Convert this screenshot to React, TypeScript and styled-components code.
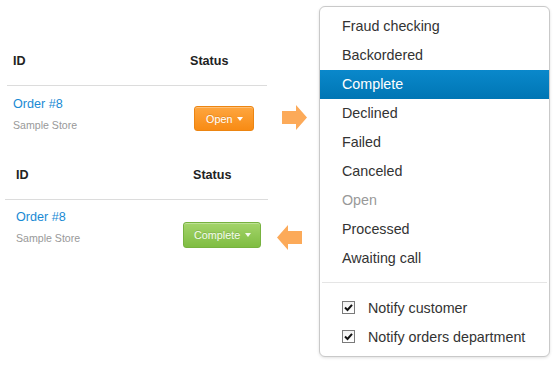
import React from "react";
import styled, { createGlobalStyle, css } from "styled-components";

const GlobalStyle = createGlobalStyle`
  html, body { margin: 0; padding: 0; background: #fff; }
  body { font-family: "Liberation Sans", Arial, sans-serif; color: #333; }
  * { box-sizing: border-box; }
`;

const Page = styled.div`
  display: flex;
  align-items: flex-start;
  width: 554px;
  height: 367px;
  overflow: hidden;
  background: #fff;
`;

const LeftColumn = styled.div`
  width: 319px;
  flex: none;
  padding-top: 37px;
  display: flex;
  flex-direction: column;
`;

const Section = styled.div<{ $left: number; $idW: number; $statusW: number; $rowH: number }>`
  display: grid;
  grid-template-columns: ${(p) => p.$idW}px ${(p) => p.$statusW}px auto;
  grid-template-rows: auto ${(p) => p.$rowH}px;
  margin-left: ${(p) => p.$left}px;
`;

const HeadCell = styled.div<{ $pad: number }>`
  height: 49px;
  border-bottom: 1px solid #dcdcdc;
  display: flex;
  align-items: center;
  padding-left: ${(p) => p.$pad}px;
  font-weight: bold;
  font-size: 12.6px;
  color: #222;
`;

const HeadSpacer = styled.div``;

const IdCell = styled.div<{ $pad: number; $top: number }>`
  display: flex;
  flex-direction: column;
  padding-left: ${(p) => p.$pad}px;
  padding-top: ${(p) => p.$top}px;
`;

const OrderLink = styled.a`
  font-size: 12.6px;
  line-height: 16px;
  color: #1a8ad4;
  text-decoration: none;
`;

const StoreName = styled.span`
  margin-top: 6px;
  font-size: 10.6px;
  line-height: 14px;
  color: #999;
`;

const StatusCell = styled.div<{ $pad: number; $top: number }>`
  display: flex;
  align-items: flex-start;
  padding-left: ${(p) => p.$pad}px;
  padding-top: ${(p) => p.$top}px;
`;

const StatusButton = styled.button<{ $variant: "open" | "complete" }>`
  display: inline-flex;
  align-items: center;
  gap: 5px;
  font-family: "Liberation Sans", Arial, sans-serif;
  font-size: 10.8px;
  color: #fff;
  border-radius: 3px;
  cursor: pointer;
  text-shadow: 0 -1px 0 rgba(0, 0, 0, 0.12);
  ${(p) =>
    p.$variant === "open"
      ? css`
          height: 25px;
          padding: 0 10px 0 11px;
          border: 1px solid #ec8512;
          background: linear-gradient(#fea63f, #f88b14);
          box-shadow: inset 0 1px 0 rgba(255, 255, 255, 0.3);
        `
      : css`
          height: 26px;
          padding: 0 9px 0 10px;
          border: 1px solid #77b23f;
          background: linear-gradient(#a4d46a, #7fbd42);
          box-shadow: inset 0 1px 0 rgba(255, 255, 255, 0.3);
          color: #f4fbee;
        `}
`;

const Caret = styled.span`
  width: 0;
  height: 0;
  border-left: 3.5px solid transparent;
  border-right: 3.5px solid transparent;
  border-top: 4px solid currentColor;
`;

const ArrowCell = styled.div<{ $gap: number; $top: number }>`
  padding-left: ${(p) => p.$gap}px;
  padding-top: ${(p) => p.$top}px;
`;

const Menu = styled.div`
  flex: none;
  margin-top: 6px;
  width: 231px;
  border: 1px solid #c9c9c9;
  border-radius: 6px;
  box-shadow: 0 1px 3px rgba(0, 0, 0, 0.12);
  padding: 5px 0;
  background: #fff;
`;

const MenuList = styled.ul`
  list-style: none;
  margin: 0;
  padding: 0;
`;

const MenuItem = styled.li<{ $active?: boolean; $disabled?: boolean }>`
  height: 29px;
  line-height: 29px;
  padding-left: 22px;
  font-size: 14.3px;
  color: ${(p) => (p.$disabled ? "#999" : p.$active ? "#fff" : "#333")};
  background: ${(p) => (p.$active ? "linear-gradient(#0a88cb, #0076b4)" : "transparent")};
`;

const Divider = styled.div`
  height: 1px;
  margin: 9px 2px 10px;
  background: #e5e5e5;
`;

const CheckRow = styled.label`
  display: flex;
  align-items: center;
  height: 29px;
  padding-left: 22px;
  font-size: 14.3px;
  color: #333;
`;

const CheckBox = styled.span`
  width: 13px;
  height: 13px;
  margin-right: 13px;
  border: 1px solid #7a7a7a;
  background: linear-gradient(#f2f2f2, #fff);
  display: flex;
  align-items: center;
  justify-content: center;
`;

const Arrow = ({ dir }: { dir: "left" | "right" }) => (
  <svg width="25" height="25" viewBox="0 0 25 25">
    <path
      d={
        dir === "right"
          ? "M0 6 H14 V0 L25 12.5 L14 25 V19 H0 Z"
          : "M25 6 H11 V0 L0 12.5 L11 25 V19 H25 Z"
      }
      fill="#fcaa59"
    />
  </svg>
);

const Check = () => (
  <svg width="11" height="11" viewBox="0 0 11 11">
    <path d="M2 5.5 L4.5 8 L9 2.8" fill="none" stroke="#111" strokeWidth="2" />
  </svg>
);

type SectionConfig = {
  left: number;
  idW: number;
  statusW: number;
  rowH: number;
  idPad: number;
  statusHeadPad: number;
  idTop: number;
  btnPad: number;
  btnTop: number;
  arrowGap: number;
  arrowTop: number;
  variant: "open" | "complete";
  label: string;
  arrow: "left" | "right";
};

const sections: SectionConfig[] = [
  {
    left: 7, idW: 176, statusW: 84, rowH: 65, idPad: 6, statusHeadPad: 7, idTop: 10,
    btnPad: 11, btnTop: 20, arrowGap: 15, arrowTop: 19, variant: "open", label: "Open", arrow: "right",
  },
  {
    left: 5, idW: 177, statusW: 86, rowH: 60, idPad: 11, statusHeadPad: 11, idTop: 9,
    btnPad: 1, btnTop: 22, arrowGap: 9, arrowTop: 25, variant: "complete", label: "Complete", arrow: "left",
  },
];

const statuses = [
  "Fraud checking",
  "Backordered",
  "Complete",
  "Declined",
  "Failed",
  "Canceled",
  "Open",
  "Processed",
  "Awaiting call",
];

export default function App() {
  return (
    <>
      <GlobalStyle />
      <Page>
        <LeftColumn>
          {sections.map((s, i) => (
            <Section key={i} $left={s.left} $idW={s.idW} $statusW={s.statusW} $rowH={s.rowH}>
              <HeadCell $pad={s.idPad}>ID</HeadCell>
              <HeadCell $pad={s.statusHeadPad}>Status</HeadCell>
              <HeadSpacer />
              <IdCell $pad={s.idPad} $top={s.idTop}>
                <OrderLink href="#">Order #8</OrderLink>
                <StoreName>Sample Store</StoreName>
              </IdCell>
              <StatusCell $pad={s.btnPad} $top={s.btnTop}>
                <StatusButton $variant={s.variant}>
                  {s.label}
                  <Caret />
                </StatusButton>
              </StatusCell>
              <ArrowCell $gap={s.arrowGap} $top={s.arrowTop}>
                <Arrow dir={s.arrow} />
              </ArrowCell>
            </Section>
          ))}
        </LeftColumn>
        <Menu>
          <MenuList>
            {statuses.map((st) => (
              <MenuItem key={st} $active={st === "Complete"} $disabled={st === "Open"}>
                {st}
              </MenuItem>
            ))}
          </MenuList>
          <Divider />
          <CheckRow>
            <CheckBox>
              <Check />
            </CheckBox>
            Notify customer
          </CheckRow>
          <CheckRow>
            <CheckBox>
              <Check />
            </CheckBox>
            Notify orders department
          </CheckRow>
        </Menu>
      </Page>
    </>
  );
}
